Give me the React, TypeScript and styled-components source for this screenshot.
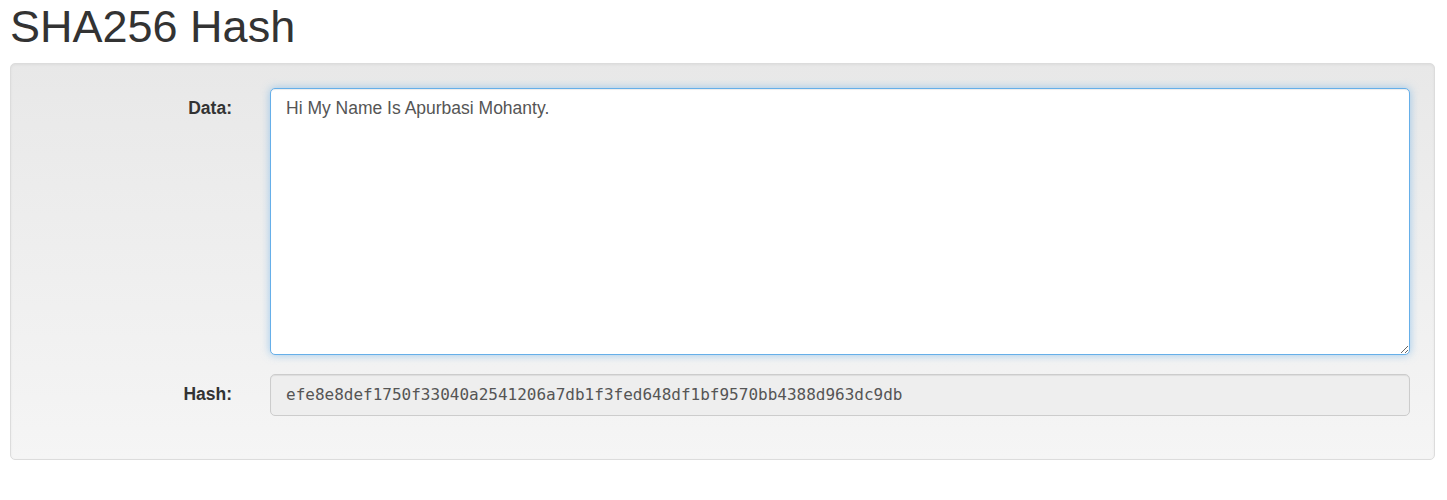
import React from "react";
import styled, { createGlobalStyle } from "styled-components";

const Global = createGlobalStyle`
  html, body { margin: 0; padding: 0; background: #fff; }
  body {
    font-family: "Liberation Sans", Arial, Helvetica, sans-serif;
    font-size: 17.5px;
    line-height: 1.42857;
    color: #333;
  }
  * { box-sizing: border-box; }
`;

const Page = styled.div`
  padding: 2px 12px 0 10px;
`;

const Title = styled.h1`
  margin: 0 0 11px 0;
  font-size: 45px;
  line-height: 1.1;
  font-weight: 500;
  color: #333;
`;

const Well = styled.div`
  border: 1px solid #dcdcdc;
  border-radius: 5px;
  padding: 24px 24px 43px 24px;
  background-image: linear-gradient(to bottom, #e8e8e8 0%, #f5f5f5 100%);
  box-shadow: inset 0 1px 3px rgba(0, 0, 0, 0.05), 0 1px 0 rgba(255, 255, 255, 0.1);
`;

const Form = styled.form`
  display: grid;
  grid-template-columns: 197px 1fr;
  column-gap: 38px;
  row-gap: 19px;
  margin: 0;
`;

const Label = styled.label`
  text-align: right;
  font-weight: 700;
  padding-top: 8px;
  color: #333;
`;

const TextArea = styled.textarea`
  display: block;
  width: 100%;
  height: 267px;
  margin: 0;
  padding: 7px 15px;
  font-family: "Liberation Sans", Arial, sans-serif;
  font-size: 17.5px;
  line-height: 1.42857;
  color: #555;
  background: #fff;
  border: 1px solid #66afe9;
  border-radius: 5px;
  outline: 0;
  box-shadow: inset 0 1px 1px rgba(0, 0, 0, 0.075), 0 0 8px rgba(102, 175, 233, 0.6);
  resize: vertical;
`;

const HashInput = styled.input`
  display: block;
  width: 100%;
  height: 42px;
  margin: 0;
  padding: 7px 15px;
  font-family: "DejaVu Sans Mono", "Liberation Mono", monospace;
  font-size: 16px;
  color: #555;
  background: #eee;
  border: 1px solid #ccc;
  border-radius: 5px;
  box-shadow: inset 0 1px 1px rgba(0, 0, 0, 0.075);
  outline: 0;
`;

export default function App() {
  return (
    <>
      <Global />
      <Page>
        <Title>SHA256 Hash</Title>
        <Well>
          <Form onSubmit={(e) => e.preventDefault()}>
            <Label htmlFor="data">Data:</Label>
            <TextArea
              id="data"
              spellCheck
              defaultValue="Hi My Name Is Apurbasi Mohanty."
            />
            <Label htmlFor="hash">Hash:</Label>
            <HashInput
              id="hash"
              readOnly
              value="efe8e8def1750f33040a2541206a7db1f3fed648df1bf9570bb4388d963dc9db"
            />
          </Form>
        </Well>
      </Page>
    </>
  );
}
